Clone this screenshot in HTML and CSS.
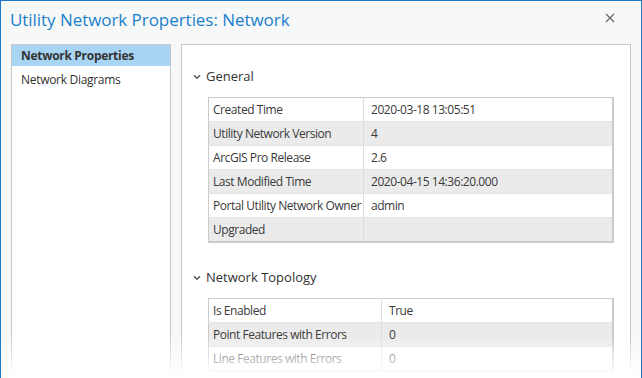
FILE: index.html
```html
<!DOCTYPE html>
<html lang="en">
<head>
    <meta charset="UTF-8">
    <title>Utility Network Properties: Network</title>
    <link rel="stylesheet" href="styles.css">
</head>
<body>
    <div class="window">
        <div class="title-bar">
            <h1 class="title">Utility Network Properties: Network</h1>
            <button class="close-btn" aria-label="Close">
                <svg width="10" height="10" viewBox="0 0 10 10">
                    <path d="M1 1 L9 9 M9 1 L1 9" stroke="#6b6b6b" stroke-width="1.3" fill="none"/>
                </svg>
            </button>
        </div>

        <div class="dialog-body">
            <ul class="nav-list">
                <li class="nav-item active">Network Properties</li>
                <li class="nav-item">Network Diagrams</li>
            </ul>

            <div class="content-panel">
                <div class="section">
                    <div class="section-header">
                        <svg class="chevron" width="8" height="6" viewBox="0 0 8 6">
                            <polyline points="1,1.2 4,4.2 7,1.2" stroke="#555" stroke-width="1.5" fill="none"/>
                        </svg>
                        <span>General</span>
                    </div>
                    <table class="prop-table general">
                        <tr><td>Created Time</td><td>2020-03-18 13:05:51</td></tr>
                        <tr><td>Utility Network Version</td><td>4</td></tr>
                        <tr><td>ArcGIS Pro Release</td><td>2.6</td></tr>
                        <tr><td>Last Modified Time</td><td>2020-04-15 14:36:20.000</td></tr>
                        <tr><td>Portal Utility Network Owner</td><td>admin</td></tr>
                        <tr><td>Upgraded</td><td></td></tr>
                    </table>
                </div>

                <div class="section">
                    <div class="section-header">
                        <svg class="chevron" width="8" height="6" viewBox="0 0 8 6">
                            <polyline points="1,1.2 4,4.2 7,1.2" stroke="#555" stroke-width="1.5" fill="none"/>
                        </svg>
                        <span>Network Topology</span>
                    </div>
                    <table class="prop-table topology">
                        <tr><td>Is Enabled</td><td>True</td></tr>
                        <tr><td>Point Features with Errors</td><td>0</td></tr>
                        <tr><td>Line Features with Errors</td><td>0</td></tr>
                    </table>
                </div>
            </div>
        </div>

        <div class="fade-out"></div>
    </div>
</body>
</html>
```

FILE: styles.css
```css
/* General Styling */
body {
    margin: 0;
    font-family: 'Open Sans', 'Noto Sans', sans-serif;
    color: #333;
}

/* Dialog Window */
.window {
    position: relative;
    width: 642px;
    height: 378px;
    box-sizing: border-box;
    border: 1px solid #1b7bcb;
    border-bottom: none;
    background-color: #f7f8f8;
    overflow: hidden;
    display: flex;
    flex-direction: column;
}

/* Title Bar */
.title-bar {
    height: 43px;
    display: flex;
    align-items: center;
    justify-content: space-between;
    padding: 0 26px 0 9px;
    flex-shrink: 0;
}

.title {
    margin: 0;
    margin-top: -6px;
    font-size: 17px;
    font-weight: normal;
    color: #1a80cc;
    letter-spacing: -0.05px;
}

.close-btn {
    background: none;
    border: none;
    padding: 0;
    margin-top: -9px;
    width: 10px;
    height: 10px;
    display: flex;
}

/* Body Layout */
.dialog-body {
    flex: 1;
    display: flex;
    gap: 10px;
    padding: 0 10px;
}

/* Left Navigation */
.nav-list {
    list-style: none;
    margin: 0;
    padding: 0;
    width: 160px;
    box-sizing: border-box;
    background-color: #fff;
    border: 1px solid #c8c8c8;
    border-bottom: none;
}

.nav-item {
    height: 21px;
    line-height: 21px;
    padding-left: 9px;
    margin-bottom: 3px;
    font-size: 12px;
    letter-spacing: -0.3px;
    color: #333;
}

.nav-item.active {
    background-color: #a8d5f3;
    font-weight: bold;
}

/* Right Content Panel */
.content-panel {
    flex: 1;
    background-color: #fff;
    border: 1px solid #c8c8c8;
    border-bottom: none;
    padding: 21px 16px 0 11px;
}

.section {
    margin-bottom: 24px;
}

.section-header {
    display: flex;
    align-items: center;
    gap: 5px;
    height: 20px;
    font-size: 13px;
    color: #333;
    margin-bottom: 11px;
}

.chevron {
    margin-top: 1px;
}

/* Property Tables */
.prop-table {
    margin-left: 15px;
    width: 406px;
    border-collapse: collapse;
    border: 1px solid #cbcbcb;
    border-right-width: 2px;
    border-bottom-width: 2px;
    font-size: 12px;
    letter-spacing: -0.45px;
    color: #3a3a3a;
}

.prop-table td {
    height: 23px;
    padding: 0 0 0 4px;
    border-bottom: 1px solid #e4e4e4;
    white-space: nowrap;
}

.prop-table td:last-child {
    padding-left: 7px;
    border-left: 1px solid #dedede;
}

.prop-table tr:nth-child(even) td {
    background-color: #ebebeb;
}

.general td:first-child {
    width: 150px;
}

.topology td:first-child {
    width: 168px;
}

/* Bottom Fade */
.fade-out {
    position: absolute;
    left: -1px;
    right: -1px;
    bottom: 0;
    height: 42px;
    background: linear-gradient(rgba(255, 255, 255, 0), #fff 92%);
}
```
